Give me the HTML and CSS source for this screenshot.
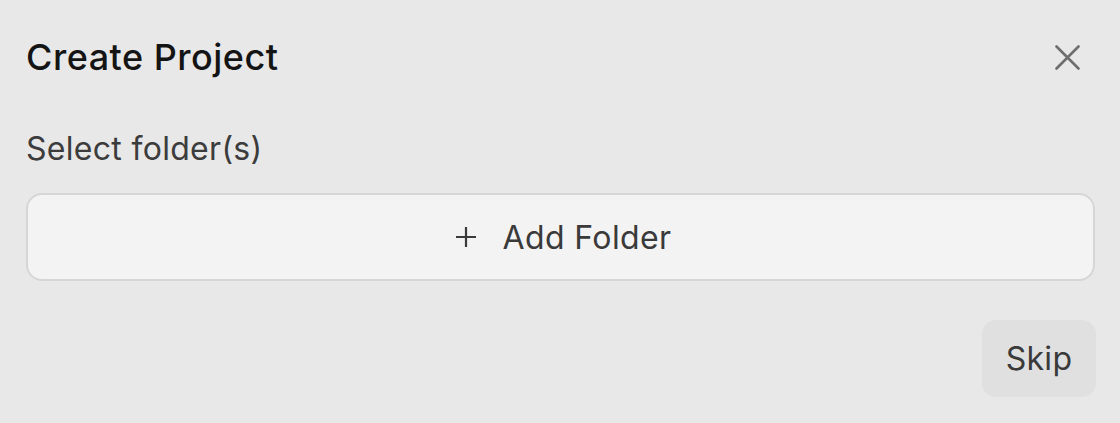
FILE: index.html
```html
<!DOCTYPE html>
<html>
<head>
<meta charset="utf-8">
<link rel="stylesheet" href="styles.css">
</head>
<body>
<div class="dialog">
  <div class="header">
    <h1 class="title">Create Project</h1>
    <button class="close" aria-label="Close">
      <svg width="25" height="25" viewBox="0 0 25 25"><path d="M1.5 1.5L23.5 23.5M23.5 1.5L1.5 23.5" stroke="#6e6e6e" stroke-width="2.6" stroke-linecap="round"/></svg>
    </button>
  </div>
  <div class="label">Select folder(s)</div>
  <button class="add">
    <svg class="plus" width="22" height="22" viewBox="0 0 22 22"><path d="M11 1V21M1 11H21" stroke="#3a3a3a" stroke-width="2.2"/></svg>
    <span>Add Folder</span>
  </button>
  <div class="footer">
    <button class="skip">Skip</button>
  </div>
</div>
</body>
</html>
```

FILE: styles.css
```css
html, body {
  margin: 0;
  padding: 0;
  background: #e8e8e8;
}
body {
  font-family: Inter, "Noto Sans", sans-serif;
  width: 1120px;
  height: 423px;
  overflow: hidden;
}
.dialog {
  display: flex;
  flex-direction: column;
  padding: 0 25px 0 26px;
}
.header {
  display: flex;
  align-items: center;
  justify-content: space-between;
  height: 114px;
}
.title {
  margin: 0;
  font-size: 36px;
  font-weight: 500;
  color: #141414;
  letter-spacing: 0.5px;
}
.close {
  border: none;
  background: none;
  padding: 0;
  margin-right: 15px;
  width: 25px;
  height: 25px;
  display: flex;
}
.label {
  font-size: 32px;
  color: #3c3c3c;
  line-height: 38px;
  margin-top: 16px;
  letter-spacing: 0.3px;
}
.add {
  margin-top: 25px;
  height: 88px;
  border: 2px solid #d6d6d6;
  border-radius: 16px;
  background: #f3f3f3;
  display: flex;
  align-items: center;
  justify-content: center;
  gap: 25px;
  font-family: inherit;
  font-size: 32px;
  color: #3a3a3a;
  padding: 0 0 0 6px;
  letter-spacing: 0.4px;
}
.footer {
  display: flex;
  justify-content: flex-end;
  margin-top: 39px;
}
.skip {
  width: 114px;
  height: 77px;
  border: none;
  border-radius: 14px;
  background: #e0e0e0;
  font-family: inherit;
  font-size: 32px;
  color: #3a3a3a;
  padding: 0;
  margin-right: -1px;
  letter-spacing: 0.3px;
}
```
